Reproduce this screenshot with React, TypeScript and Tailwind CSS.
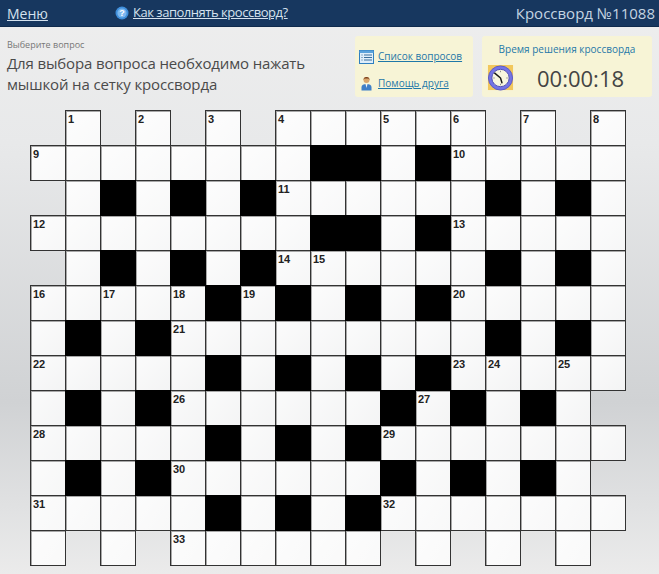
import React from 'react'

const FONT = "font-['Open_Sans','Noto_Sans',sans-serif]"

// '.' пусто, '#' чёрная, '_' белая, числа — номер вопроса
const ROWS: string[][] = [
  '. 1 . 2 . 3 . 4 _ _ 5 _ 6 . 7 . 8'.split(' '),
  '9 _ _ _ _ _ _ _ # # _ # 10 _ _ _ _'.split(' '),
  '. _ # _ # _ # 11 _ _ _ _ _ # _ # _'.split(' '),
  '12 _ _ _ _ _ _ _ # # _ # 13 _ _ _ _'.split(' '),
  '. _ # _ # _ # 14 15 _ _ _ _ # _ # _'.split(' '),
  '16 _ 17 _ 18 # 19 # _ # _ # 20 _ _ _ _'.split(' '),
  '_ # _ # 21 _ _ _ _ _ _ _ _ # _ # _'.split(' '),
  '22 _ _ _ _ # _ # _ # _ # 23 24 _ 25 _'.split(' '),
  '_ # _ # 26 _ _ _ _ _ # 27 # _ # _ .'.split(' '),
  '28 _ _ _ _ # _ # _ # 29 _ _ _ _ _ _'.split(' '),
  '_ # _ # 30 _ _ _ _ _ # _ # _ # _ .'.split(' '),
  '31 _ _ _ _ # _ # _ # 32 _ _ _ _ _ _'.split(' '),
  '_ . _ . 33 _ _ _ _ _ . _ . _ . _ .'.split(' '),
]

const Cell = ({ value }: { value: string }) => {
  if (value === '.') return <div />
  if (value === '#') return <div className="w-[36px] h-[36px] bg-black relative z-10" />
  return (
    <div className="w-[36px] h-[36px] border border-[#333] shadow-[inset_1px_1px_0_#a8a8a8] bg-[linear-gradient(135deg,rgba(255,255,255,0.92),rgba(255,255,255,0.74))] pl-[2px] pt-[2px] text-[11px] leading-[12px] font-bold text-[#222] font-['Liberation_Sans',sans-serif]">
      {value !== '_' && value}
    </div>
  )
}

const HelpIcon = () => (
  <svg width="14" height="14" viewBox="0 0 14 14">
    <circle cx="7" cy="7" r="6.5" fill="#3f8fdc" />
    <circle cx="7" cy="7" r="4.6" fill="#7db8ef" />
    <text x="7" y="10.2" textAnchor="middle" fontSize="9" fontWeight="700" fill="#fff" fontFamily="Liberation Sans">?</text>
  </svg>
)

const ListIcon = () => (
  <svg width="15" height="14" viewBox="0 0 15 14">
    <rect x="0.5" y="0.5" width="14" height="13" fill="#dfeefa" stroke="#2f7fc0" />
    <rect x="0.5" y="0.5" width="14" height="2.5" fill="#5aa2dc" />
    <path d="M2.5 5h1M5 5h8M2.5 7.5h1M5 7.5h8M2.5 10h1M5 10h8" stroke="#3a6f9c" strokeWidth="1" />
  </svg>
)

const FriendIcon = () => (
  <svg width="11" height="15" viewBox="0 0 11 15">
    <circle cx="5.5" cy="4" r="3" fill="#d9a56c" />
    <path d="M2.5 4a3 3 0 0 1 6 0l-1-1.5h-4z" fill="#7a3f1c" />
    <path d="M0.5 14.5v-3.5c0-2 2-3 5-3s5 1 5 3v3.5z" fill="#3f7fc8" />
    <path d="M4.5 8h2l-1 4z" fill="#f3f3f3" />
  </svg>
)

const ClockIcon = () => (
  <svg width="27" height="28" viewBox="0 0 28 29">
    <path d="M1 1h26v26H1z" fill="#f2c75c" />
    <circle cx="14" cy="14.5" r="12.5" fill="#7474e6" stroke="#5a5ac8" />
    <circle cx="14" cy="14.5" r="9" fill="#f8f6df" stroke="#4d4db4" />
    <path d="M14 14.5L8 9.5M14 14.5l1.5 5" stroke="#1a1a1a" strokeWidth="1.5" strokeLinecap="round" />
    <path d="M14 7v1.5M14 20.5V22M6.5 14.5H8M20 14.5h1.5" stroke="#8a8a8a" strokeWidth="1" />
  </svg>
)

export default function App() {
  return (
    <div className={`${FONT} w-[659px] h-[574px] overflow-hidden bg-[linear-gradient(180deg,#eeeeee_0%,#e8e9ea_25%,#d0d2d4_70%,#e0e1e2_88%,#ebebeb_100%)]`}>
      <header className="h-[27px] bg-[#17375f] border-b border-[#0f2a4c] flex items-center pl-[7px] pr-[4px] text-[#d5e2ee]">
        <a className="underline w-[108px] text-[14px]">Меню</a>
        <HelpIcon />
        <a className="underline ml-[4px] text-[13px] tracking-[-0.47px]">Как заполнять кроссворд?</a>
        <span className="ml-auto text-[15px] text-[#c4d4e2]">Кроссворд №11088</span>
      </header>

      <div className="flex h-[83px]">
        <div className="w-[355px] pl-[7px] pt-[12px] text-[#4a4a4a]">
          <div className="text-[9px] leading-[11px] text-[#777]">Выберите вопрос</div>
          <div className="text-[15px] leading-[21px] mt-[3px] tracking-[-0.14px]">Для выбора вопроса необходимо нажать мышкой на сетку кроссворда</div>
        </div>
        <div className="mt-[9px] w-[118px] h-[61px] bg-[#f7f4d6] rounded-[3px] pl-[4px] pt-[13px] flex flex-col gap-[12px] text-[10px] text-[#1f78a8]">
          <a className="flex items-center gap-[4px] underline"><ListIcon />Список вопросов</a>
          <a className="flex items-center gap-[6px] underline pl-[2px]"><FriendIcon />Помощь друга</a>
        </div>
        <div className="mt-[9px] ml-[9px] w-[170px] h-[61px] bg-[#f7f4d6] rounded-[3px] pt-[5px]">
          <div className="text-center text-[10px] leading-[16px] text-[#1f78a8]">Время решения кроссворда</div>
          <div className="flex items-center pl-[5px] mt-[6px]">
            <ClockIcon />
            <span className="ml-[23px] text-[22px] leading-[30px] text-[#444]">00:00:18</span>
          </div>
        </div>
      </div>

      <div className="ml-[30px] grid grid-cols-[repeat(17,35px)] auto-rows-[35px]">
        {ROWS.flat().map((value, i) => (
          <Cell key={i} value={value} />
        ))}
      </div>
    </div>
  )
}
